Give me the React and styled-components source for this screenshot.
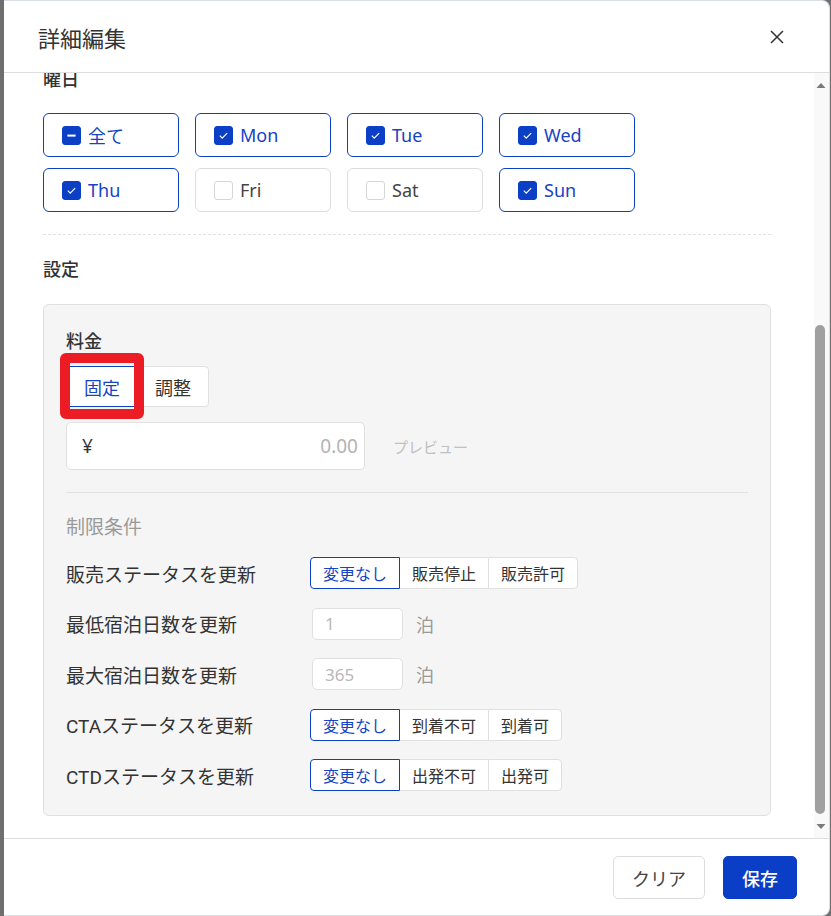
import React, { useLayoutEffect, useRef, useState } from 'react'
import styled, { createGlobalStyle } from 'styled-components';

const GlobalStyle = createGlobalStyle`
  html, body { margin: 0; height: 100%; }
  body {
    background: #6f6f6f;
    font-family: "Noto Sans", "Noto Sans CJK JP", sans-serif;
    color: #333;
  }
  #root { height: 100%; }
`;

const Page = styled.div`
  height: 100%;
  box-sizing: border-box;
  padding: 0 1px 0 4px;
  display: flex;
`;

const Modal = styled.div`
  flex: 1;
  background: #fff;
  border: 1px solid #d8dfe7;
  border-left: none;
  border-radius: 0 8px 8px 0;
  display: flex;
  flex-direction: column;
  overflow: hidden;
`;

const Header = styled.div`
  height: 71px;
  flex-shrink: 0;
  display: flex;
  align-items: center;
  justify-content: space-between;
  padding: 0 44px 0 34px;
  border-bottom: 1px solid #dedede;
`;

const Title = styled.h2`
  margin: 0;
  font-size: 22px;
  font-weight: 400;
  color: #333;
  font-family: "Noto Sans CJK JP", sans-serif;
`;

const Close = styled.button`
  border: none;
  background: none;
  padding: 0;
  width: 16px;
  height: 16px;
  cursor: pointer;
  display: flex;
`;

const ScrollArea = styled.div`
  flex: 1;
  min-height: 0;
  display: flex;
`;

const Body = styled.div`
  flex: 1;
  overflow-y: scroll;
  scrollbar-width: none;
  padding: 24px 43px 22px 39px;
  &::-webkit-scrollbar { display: none; }
`;

const ScrollBar = styled.div`
  width: 15px;
  flex-shrink: 0;
  background: #f9f9f9;
  display: flex;
  flex-direction: column;
`;

const ScrollButton = styled.div`
  height: 24px;
  display: flex;
  align-items: center;
  justify-content: center;
  padding-right: 1px;
`;

const Track = styled.div`
  flex: 1;
  position: relative;
`;

const Thumb = styled.div`
  position: absolute;
  left: 1px;
  width: 10px;
  border-radius: 5px;
  background: #a0a0a0;
`;

const SectionLabel = styled.div`
  font-size: 18px;
  font-weight: 500;
  line-height: 24px;
  color: #333;
  margin-bottom: ${p => p.$gap || 23}px;
  font-family: "Noto Sans CJK JP", sans-serif;
`;

const Dashed = styled.div`
  border-top: 1px dashed #e2e2e2;
  margin: 22px 0 21px;
`;

const CheckGrid = styled.div`
  display: grid;
  grid-template-columns: repeat(4, 136px);
  column-gap: 16px;
  row-gap: 11px;
`;

const CheckItem = styled.label`
  height: 44px;
  box-sizing: border-box;
  border: 1px solid ${p => p.$on ? '#0b3fc6' : '#dddddd'};
  border-radius: 6px;
  display: flex;
  align-items: center;
  gap: 7px;
  padding-left: 18px;
  font-size: 18px;
  color: ${p => p.$on ? '#1743c4' : '#444'};
  background: #fff;
`;

const Box = styled.span`
  width: 19px;
  height: 19px;
  box-sizing: border-box;
  border-radius: 3px;
  border: 1px solid ${p => p.$on ? '#0b3fc6' : '#d6d6d6'};
  background: ${p => p.$on ? '#0b3fc6' : '#fff'};
  display: flex;
  align-items: center;
  justify-content: center;
`;

const DateRow = styled.div`
  display: flex;
  align-items: center;
  gap: 12px;
  color: #999;
`;

const DateInput = styled.div`
  width: 200px;
  height: 44px;
  box-sizing: border-box;
  border: 1px solid #dddddd;
  border-radius: 4px;
  display: flex;
  align-items: center;
  padding: 0 14px;
  font-size: 16px;
  color: #333;
`;

const Panel = styled.div`
  background: #f5f5f5;
  border: 1px solid #e0e0e0;
  border-radius: 6px;
  padding: 23px 22px 24px 22px;
`;

const PanelLabel = styled.div`
  font-size: 18px;
  font-weight: 500;
  line-height: 24px;
  color: #333;
  margin-bottom: 14px;
  font-family: "Noto Sans CJK JP", sans-serif;
`;

const ModeGroup = styled.div`
  display: flex;
  margin-bottom: 15px;
`;

const ModeButton = styled.button`
  position: relative;
  height: 41px;
  padding: 0 17px;
  font-family: "Noto Sans CJK JP", sans-serif;
  font-size: 18px;
  background: #fff;
  color: ${p => p.$active ? '#1743c4' : '#333'};
  border: 1px solid ${p => p.$active ? '#0b3fc6' : '#e0e0e0'};
  border-radius: ${p => p.$first ? '4px 0 0 4px' : '0 4px 4px 0'};
  margin-left: ${p => p.$first ? 0 : -1}px;
  z-index: ${p => p.$active ? 1 : 0};
`;

const Highlight = styled.span`
  position: absolute;
  left: -7px;
  right: -7px;
  top: -14px;
  bottom: -13px;
  border: 10px solid #ec1c24;
  border-radius: 6px;
  pointer-events: none;
`;

const PriceRow = styled.div`
  display: flex;
  align-items: center;
  gap: 28px;
`;

const PriceInput = styled.div`
  width: 299px;
  height: 48px;
  box-sizing: border-box;
  background: #fff;
  border: 1px solid #e0e0e0;
  border-radius: 5px;
  display: flex;
  align-items: center;
  justify-content: space-between;
  padding: 0 6px 0 15px;
  font-size: 19px;
`;

const Placeholder = styled.span`
  color: #b3b3b3;
`;

const Preview = styled.span`
  font-size: 15px;
  color: #c0c0c0;
  font-family: "Noto Sans CJK JP", sans-serif;
`;

const Rule = styled.div`
  border-top: 1px solid #e2e2e2;
  margin: 22px 0 21px;
`;

const MutedLabel = styled.div`
  font-size: 19px;
  line-height: 24px;
  color: #9a9a9a;
  margin-bottom: 19px;
  font-family: "Noto Sans CJK JP", sans-serif;
`;

const Rows = styled.div`
  display: flex;
  flex-direction: column;
  gap: 18.5px;
`;

const Row = styled.div`
  display: flex;
  align-items: center;
  height: 32px;
`;

const RowLabel = styled.div`
  width: 244px;
  font-size: 19px;
  color: #333;
  font-family: "Roboto", "Noto Sans CJK JP", sans-serif;
`;

const Segment = styled.div`
  display: flex;
`;

const SegButton = styled.button`
  height: 32px;
  padding: 0 12px;
  font-family: "Noto Sans CJK JP", sans-serif;
  font-size: 16px;
  background: #fff;
  color: ${p => p.$active ? '#1743c4' : '#333'};
  border: 1px solid ${p => p.$active ? '#0b3fc6' : '#e0e0e0'};
  margin-left: -1px;
  z-index: ${p => p.$active ? 1 : 0};
  &:first-child { margin-left: 0; border-radius: 4px 0 0 4px; }
  &:last-child { border-radius: 0 4px 4px 0; }
`;

const NumInput = styled.div`
  width: 91px;
  height: 32px;
  box-sizing: border-box;
  margin-left: 2px;
  background: #fff;
  border: 1px solid #e0e0e0;
  border-radius: 5px;
  display: flex;
  align-items: center;
  padding: 0 12px;
  font-size: 17px;
  color: #b8b8b8;
`;

const Unit = styled.span`
  margin-left: 13px;
  font-size: 18px;
  color: #999;
  font-family: "Noto Sans CJK JP", sans-serif;
`;

const Footer = styled.div`
  height: 76px;
  flex-shrink: 0;
  border-top: 1px solid #dedede;
  display: flex;
  align-items: center;
  justify-content: flex-end;
  gap: 18px;
  padding: 0 32px 0 0;
`;

const FooterButton = styled.button`
  height: 43px;
  padding: 0 18px;
  border-radius: 5px;
  font-family: "Noto Sans CJK JP", sans-serif;
  font-size: 18px;
  font-weight: ${p => p.$primary ? 500 : 400};
  background: ${p => p.$primary ? '#0a3ec6' : '#fff'};
  color: ${p => p.$primary ? '#fff' : '#444'};
  border: 1px solid ${p => p.$primary ? '#0a3ec6' : '#dddddd'};
  margin-top: 1px;
`;

const Check = ({ on, minus }) => (
  <Box $on={on}>
    {on && !minus && (
      <svg width="11" height="11" viewBox="0 0 12 12" fill="none">
        <path d="M2 6.2l2.6 2.6L10 3.4" stroke="#fff" strokeWidth="1.3" />
      </svg>
    )}
    {minus && (
      <svg width="11" height="11" viewBox="0 0 12 12">
        <rect x="1.5" y="5" width="9" height="2.2" fill="#fff" />
      </svg>
    )}
  </Box>
);

const Arrow = ({ down }) => (
  <svg width="10" height="7" viewBox="0 0 10 7">
    <path d={down ? 'M0.5 1h9L5 6z' : 'M0.5 6h9L5 1z'} fill="#7a7a7a" />
  </svg>
);

const days = [
  { label: '全て', on: true, minus: true },
  { label: 'Mon', on: true },
  { label: 'Tue', on: true },
  { label: 'Wed', on: true },
  { label: 'Thu', on: true },
  { label: 'Fri', on: false },
  { label: 'Sat', on: false },
  { label: 'Sun', on: true },
];

const rooms = [
  { label: '全て', on: true },
  { label: 'シングル', on: true },
  { label: 'セミダブル', on: true },
  { label: 'ダブル', on: true },
  { label: 'ツイン', on: true },
  { label: 'トリプル', on: true },
  { label: '和室', on: true },
  { label: 'スイート', on: true },
];

const rows = [
  { label: '販売ステータスを更新', options: ['変更なし', '販売停止', '販売許可'] },
  { label: '最低宿泊日数を更新', value: '1' },
  { label: '最大宿泊日数を更新', value: '365' },
  { label: 'CTAステータスを更新', options: ['変更なし', '到着不可', '到着可'] },
  { label: 'CTDステータスを更新', options: ['変更なし', '出発不可', '出発可'] },
];

const CloseIcon = () => (
  <svg width="16" height="16" viewBox="0 0 16 16" fill="none">
    <path d="M2 2l12 12M14 2L2 14" stroke="#333" strokeWidth="1.5" />
  </svg>
);

const App = () => {
  const bodyRef = useRef(null);
  const trackRef = useRef(null);
  const [thumb, setThumb] = useState({ top: 0, height: 0 });

  useLayoutEffect(() => {
    const el = bodyRef.current;
    const track = trackRef.current;
    if (!el || !track) return;
    el.scrollTop = el.scrollHeight;
    const len = track.clientHeight;
    const height = len * el.clientHeight / el.scrollHeight;
    const max = el.scrollHeight - el.clientHeight;
    const top = max > 0 ? (len - height) * el.scrollTop / max : 0;
    setThumb({ top, height });
  }, []);

  return (
    <Page>
      <GlobalStyle />
      <Modal>
        <Header>
          <Title>詳細編集</Title>
          <Close aria-label="close"><CloseIcon /></Close>
        </Header>
        <ScrollArea>
          <Body ref={bodyRef}>
            <SectionLabel>対象期間</SectionLabel>
            <DateRow>
              <DateInput>2024/04/01</DateInput>
              〜
              <DateInput>2024/04/30</DateInput>
            </DateRow>
            <Dashed />
            <SectionLabel>部屋タイプ</SectionLabel>
            <CheckGrid>
              {rooms.map(r => (
                <CheckItem key={r.label} $on={r.on}>
                  <Check on={r.on} />
                  {r.label}
                </CheckItem>
              ))}
            </CheckGrid>
            <Dashed />

            <SectionLabel>曜日</SectionLabel>
            <CheckGrid>
              {days.map(d => (
                <CheckItem key={d.label} $on={d.on}>
                  <Check on={d.on} minus={d.minus} />
                  {d.label}
                </CheckItem>
              ))}
            </CheckGrid>
            <Dashed />
            <SectionLabel $gap={24}>設定</SectionLabel>
            <Panel>
              <PanelLabel>料金</PanelLabel>
              <ModeGroup>
                <ModeButton $first $active>
                  固定
                  <Highlight />
                </ModeButton>
                <ModeButton>調整</ModeButton>
              </ModeGroup>
              <PriceRow>
                <PriceInput>
                  <span>¥</span>
                  <Placeholder>0.00</Placeholder>
                </PriceInput>
                <Preview>プレビュー</Preview>
              </PriceRow>
              <Rule />
              <MutedLabel>制限条件</MutedLabel>
              <Rows>
                {rows.map(r => (
                  <Row key={r.label}>
                    <RowLabel>{r.label}</RowLabel>
                    {r.options ? (
                      <Segment>
                        {r.options.map((o, i) => (
                          <SegButton key={o} $active={i === 0}>{o}</SegButton>
                        ))}
                      </Segment>
                    ) : (
                      <>
                        <NumInput>{r.value}</NumInput>
                        <Unit>泊</Unit>
                      </>
                    )}
                  </Row>
                ))}
              </Rows>
            </Panel>
          </Body>
          <ScrollBar>
            <ScrollButton><Arrow /></ScrollButton>
            <Track ref={trackRef}>
              <Thumb style={{ top: thumb.top, height: thumb.height }} />
            </Track>
            <ScrollButton><Arrow down /></ScrollButton>
          </ScrollBar>
        </ScrollArea>
        <Footer>
          <FooterButton>クリア</FooterButton>
          <FooterButton $primary>保存</FooterButton>
        </Footer>
      </Modal>
    </Page>
  )
}

export default App
